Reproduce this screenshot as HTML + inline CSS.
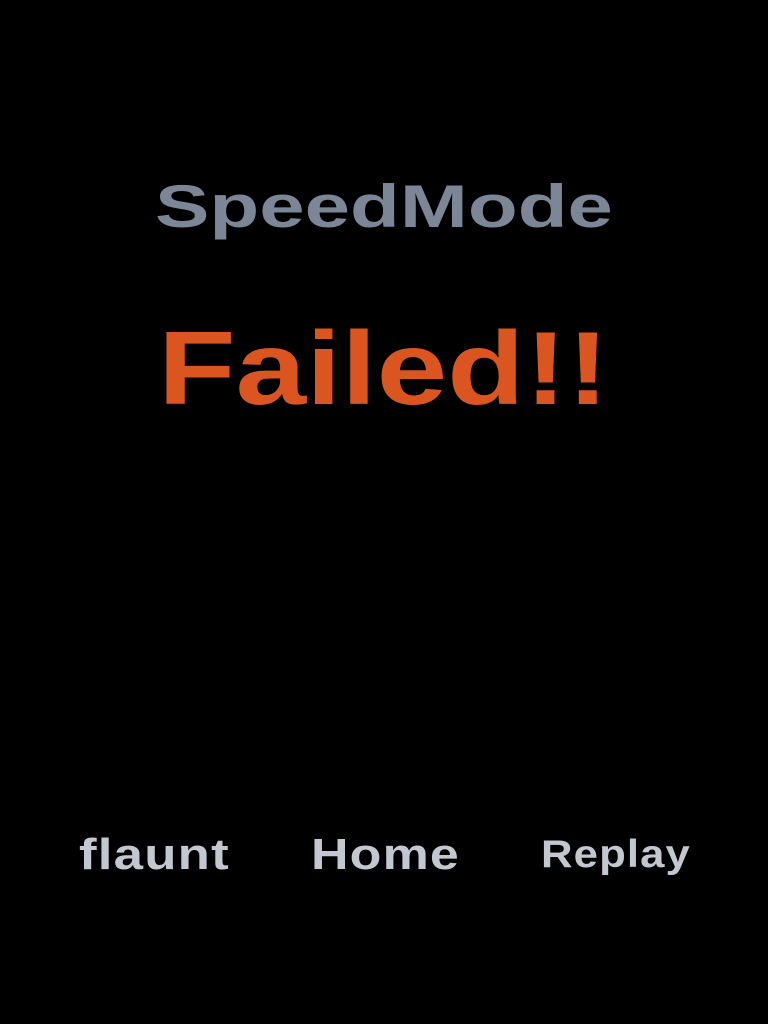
<!DOCTYPE html>
<html><head><meta charset="utf-8"><style>
html,body{margin:0;padding:0;background:#000;width:768px;height:1024px;overflow:hidden}
div{position:absolute;font-family:"Liberation Sans",sans-serif;font-weight:bold;white-space:nowrap;line-height:1;transform-origin:0 0}
#t{left:155px;top:177px;font-size:60px;color:#7b8796;transform:scaleX(1.36)}
#f{left:158px;top:317px;font-size:104px;color:#da5520;transform:scaleX(1.22)}
.b{top:833px;font-size:44px;color:#c3c7cf;letter-spacing:1px}
</style></head><body>
<div id="t">SpeedMode</div>
<div id="f">Failed!!</div>
<div class="b" style="left:79px;transform:scaleX(1.2)">flaunt</div>
<div class="b" style="left:311px;transform:scaleX(1.18)">Home</div>
<div class="b" style="left:541px;font-size:39px;top:835px;transform:scaleX(1.12)">Replay</div>
</body></html>
